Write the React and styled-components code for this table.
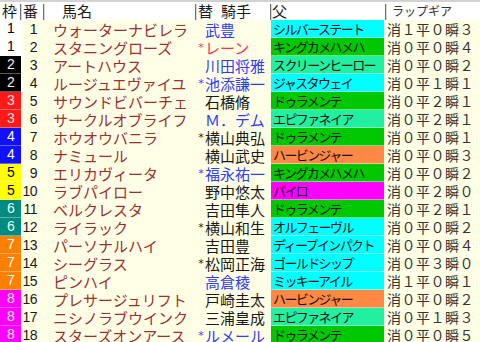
import React from 'react';
import styled, { createGlobalStyle } from 'styled-components';

const Global = createGlobalStyle`
  html, body { margin: 0; padding: 0; background: #ffffff; }
  body { width: 480px; height: 342px; overflow: hidden; }
`;

const COLS = '21px 23px 152px 75px 115px 94px';

const FRAME = {
  1: { bg: '#ffffff', fg: '#000000' },
  2: { bg: '#000000', fg: '#f4f4f4' },
  3: { bg: '#ff1a1a', fg: '#ffdede' },
  4: { bg: '#1010ff', fg: '#ffffff' },
  5: { bg: '#ffff00', fg: '#000000' },
  6: { bg: '#008a80', fg: '#e8fffa' },
  7: { bg: '#ff8000', fg: '#ffffff' },
  8: { bg: '#ff00ff', fg: '#ffe8ff' },
};

const SIRE = {
  cyan: '#00ffff',
  green: '#00c800',
  mint: '#20f0a0',
  orange: '#ff8844',
  magenta: '#ff00ff',
};

const JOCKEY = {
  blue: '#2d3cff',
  red: '#ff3060',
  black: '#1a1a1a',
};

const rows = [
  [1, 1, 'ウォーターナビレラ', '', '武豊', 'blue', 'シルバーステート', 'cyan', '消１平０瞬３'],
  [1, 2, 'スタニングローズ', '*', 'レーン', 'red', 'キングカメハメハ', 'green', '消０平０瞬４'],
  [2, 3, 'アートハウス', '', '川田将雅', 'blue', 'スクリーンヒーロー', 'mint', '消０平０瞬２'],
  [2, 4, 'ルージュエヴァイユ', '*', '池添謙一', 'blue', 'ジャスタウェイ', 'cyan', '消０平１瞬１'],
  [3, 5, 'サウンドビバーチェ', '', '石橋脩', 'black', 'ドゥラメンテ', 'green', '消０平２瞬１'],
  [3, 6, 'サークルオブライフ', '', 'Ｍ．デム', 'blue', 'エピファネイア', 'mint', '消０平２瞬１'],
  [4, 7, 'ホウオウバニラ', '*', '横山典弘', 'black', 'ドゥラメンテ', 'green', '消０平０瞬１'],
  [4, 8, 'ナミュール', '', '横山武史', 'black', 'ハービンジャー', 'orange', '消０平０瞬３'],
  [5, 9, 'エリカヴィータ', '*', '福永祐一', 'blue', 'キングカメハメハ', 'green', '消０平０瞬２'],
  [5, 10, 'ラブパイロー', '', '野中悠太', 'black', 'パイロ', 'magenta', '消０平２瞬０'],
  [6, 11, 'ベルクレスタ', '', '吉田隼人', 'black', 'ドゥラメンテ', 'green', '消０平２瞬１'],
  [6, 12, 'ライラック', '*', '横山和生', 'black', 'オルフェーヴル', 'cyan', '消０平０瞬２'],
  [7, 13, 'パーソナルハイ', '', '吉田豊', 'black', 'ディープインパクト', 'cyan', '消０平０瞬４'],
  [7, 14, 'シーグラス', '*', '松岡正海', 'black', 'ゴールドシップ', 'cyan', '消０平３瞬０'],
  [7, 15, 'ピンハイ', '', '高倉稜', 'blue', 'ミッキーアイル', 'cyan', '消１平０瞬１'],
  [8, 16, 'プレサージュリフト', '', '戸崎圭太', 'black', 'ハービンジャー', 'orange', '消０平０瞬２'],
  [8, 17, 'ニシノラブウインク', '', '三浦皇成', 'black', 'エピファネイア', 'mint', '消０平１瞬３'],
  [8, 18, 'スターズオンアース', '*', 'ルメール', 'blue', 'ドゥラメンテ', 'green', '消０平０瞬５'],
];

const Table = styled.div`
  width: 480px;
  height: 342px;
  display: flex;
  flex-direction: column;
  font-family: "Noto Sans CJK JP", "Noto Sans", sans-serif;
  background: #ffffe6;
`;

const Header = styled.div`
  display: grid;
  grid-template-columns: ${COLS};
  height: 20px;
  box-sizing: border-box;
  border-top: 2px solid #d2d2d2;
  background: #ffffff;
  color: #1a1a1a;
  font-size: 15px;
  line-height: 18px;
`;

const HCell = styled.div`
  position: relative;
  display: flex;
  align-items: center;
  gap: ${(p) => p.$gap || 0}px;
  padding-left: ${(p) => p.$pad || 0}px;
  font-size: ${(p) => p.$size || 15}px;
  color: ${(p) => p.$color || '#1a1a1a'};
  white-space: nowrap;
  &::before {
    content: '';
    display: ${(p) => (p.$first ? 'none' : 'block')};
    position: absolute;
    left: -1px;
    top: 2px;
    bottom: 0;
    width: 1px;
    background: #6e6e6e;
    box-shadow: 1px 0 0 #d8d8d8;
  }
`;

const Body = styled.div`
  flex: 1;
  display: grid;
  grid-template-rows: repeat(18, 1fr);
`;

const Row = styled.div`
  display: grid;
  grid-template-columns: ${COLS};
  align-items: stretch;
  font-size: 15px;
  line-height: 17px;
  white-space: nowrap;
`;

const FrameCell = styled.div`
  background: ${(p) => FRAME[p.$frame].bg};
  color: ${(p) => FRAME[p.$frame].fg};
  border-bottom: 1px solid rgba(255, 255, 255, 0.35);
  font-family: "Liberation Sans", Arial, sans-serif;
  font-size: 14px;
  text-align: center;
  display: flex;
  align-items: center;
  justify-content: center;
  padding-left: 1px;
`;

const NumCell = styled.div`
  font-family: "Liberation Sans", Arial, sans-serif;
  font-size: 14px;
  letter-spacing: -0.5px;
  color: #1a1a1a;
  display: flex;
  align-items: center;
  justify-content: flex-end;
  padding-right: 7px;
`;

const NameCell = styled.div`
  color: #9b3030;
  display: flex;
  align-items: center;
  padding-left: 9px;
`;

const JockeyCell = styled.div`
  display: grid;
  grid-template-columns: 9px 1fr;
  align-items: center;
  color: ${(p) => JOCKEY[p.$tone]};
`;

const Mark = styled.span`
  font-family: "DejaVu Sans", sans-serif;
  font-size: 11px;
  text-align: center;
  padding-left: 1px;
`;

const SireCell = styled.div`
  background: ${(p) => SIRE[p.$tone]};
  border-bottom: 1px solid rgba(255, 255, 255, 0.45);
  margin-right: 2px;
  color: #111;
  font-size: 13px;
  letter-spacing: -1.6px;
  display: flex;
  align-items: center;
  padding-left: 2px;
`;

const LapCell = styled.div`
  color: #333;
  font-size: 14px;
  letter-spacing: 0.5px;
  display: flex;
  align-items: center;
  padding-left: 1px;
`;

export default function App() {
  return (
    <>
      <Global />
      <Table>
        <Header>
          <HCell $first $pad={2}>枠</HCell>
          <HCell $pad={2}>番</HCell>
          <HCell $pad={18}>馬名</HCell>
          <HCell $pad={2} $gap={8}>
            <span>替</span>
            <span>騎手</span>
          </HCell>
          <HCell $pad={1}>父</HCell>
          <HCell $pad={6} $size={12} $color="#333">ラップギア</HCell>
        </Header>
        <Body>
          {rows.map(([frame, num, name, mark, jockey, tone, sire, sireTone, lap]) => (
            <Row key={num}>
              <FrameCell $frame={frame}>{frame}</FrameCell>
              <NumCell>{num}</NumCell>
              <NameCell>{name}</NameCell>
              <JockeyCell $tone={tone}>
                <Mark>{mark}</Mark>
                <span>{jockey}</span>
              </JockeyCell>
              <SireCell $tone={sireTone}>{sire}</SireCell>
              <LapCell>{lap}</LapCell>
            </Row>
          ))}
        </Body>
      </Table>
    </>
  );
}
